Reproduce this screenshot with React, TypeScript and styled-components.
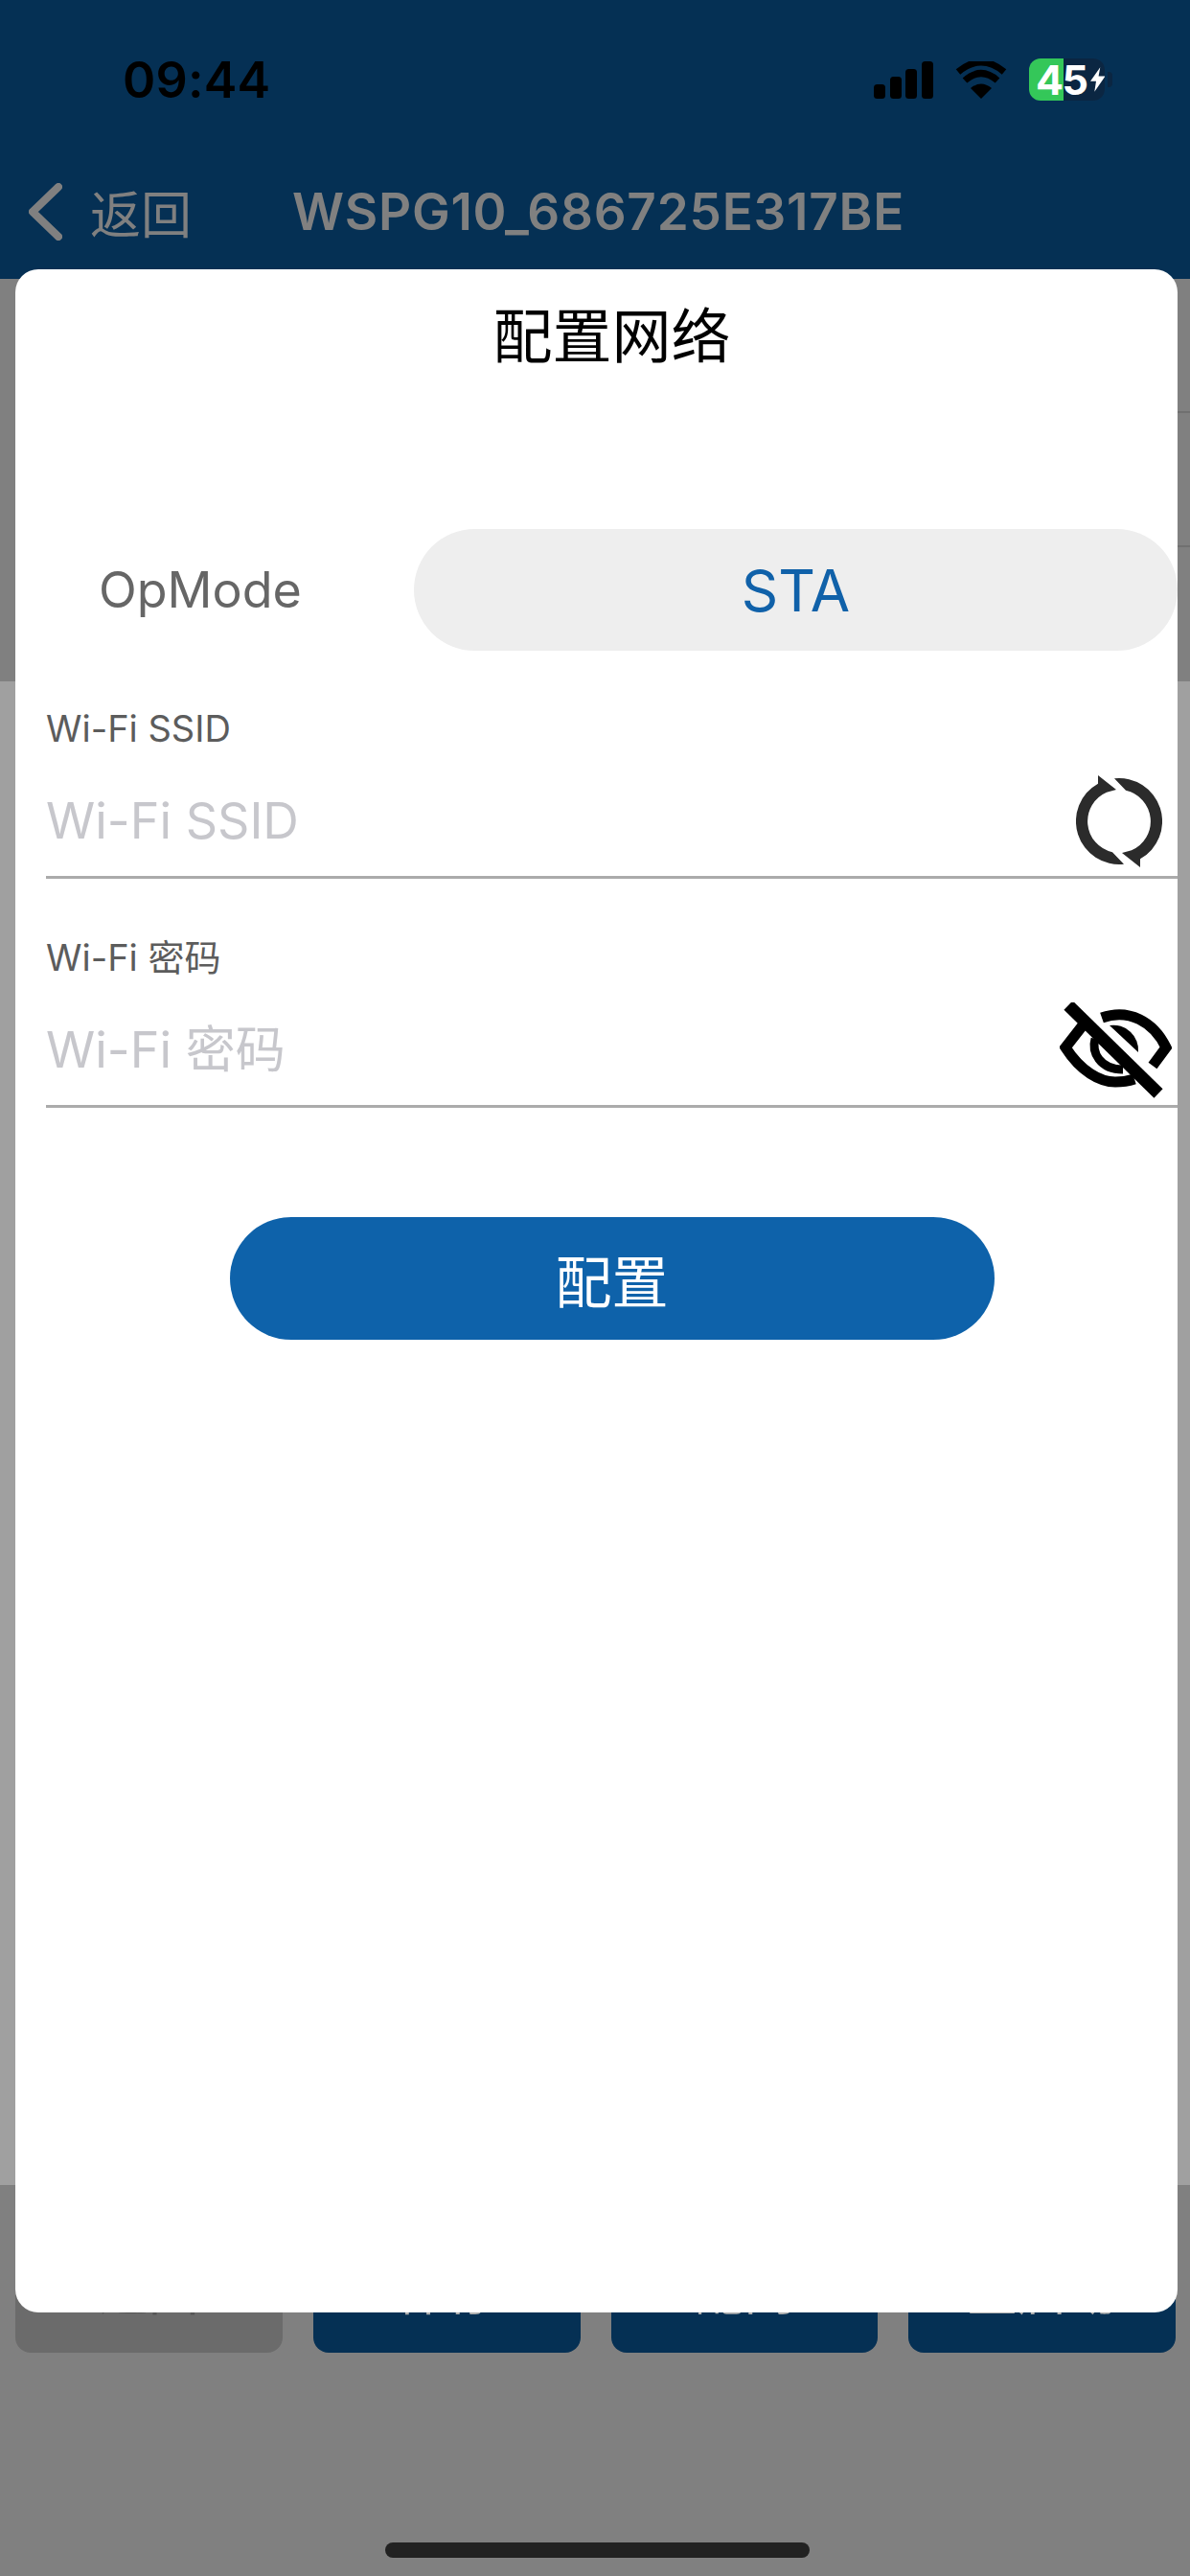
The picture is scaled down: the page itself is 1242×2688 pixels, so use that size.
import React from "react"
import styled, { createGlobalStyle } from "styled-components"

const GlobalStyle = createGlobalStyle`
  html, body {
    margin: 0;
    padding: 0;
    background: #808080;
  }
  * {
    box-sizing: border-box;
  }
`

const FONT = `Inter, "Noto Sans CJK SC", sans-serif`

const Page = styled.div`
  position: relative;
  width: 1242px;
  height: 2688px;
  overflow: hidden;
  display: flex;
  flex-direction: column;
  font-family: ${FONT};
  background: #808080;
`

const Header = styled.header`
  height: 291px;
  background: #053054;
  display: flex;
  flex-direction: column;
`

const StatusBar = styled.div`
  height: 166px;
  padding: 0 89px 0 128px;
  display: flex;
  align-items: center;
  justify-content: space-between;
`

const Time = styled.span`
  font-size: 52px;
  font-weight: 600;
  color: #000;
  letter-spacing: 0.2px;
`

const StatusIcons = styled.div`
  display: flex;
  align-items: center;
  gap: 23px;
`

const Battery = styled.div`
  position: relative;
  width: 79px;
  height: 44px;
  border-radius: 12px;
  background: linear-gradient(90deg, #34c759 0 36px, #0b2642 36px 100%);
  display: flex;
  align-items: center;
  padding-left: 7px;
  color: #fff;
  font-size: 43px;
  font-weight: 700;
  letter-spacing: -1.5px;

  &::after {
    content: "";
    position: absolute;
    right: -8px;
    top: 14px;
    width: 5px;
    height: 16px;
    border-radius: 0 4px 4px 0;
    background: #0b2642;
  }
`

const NavBar = styled.div`
  height: 125px;
  padding: 0 0 16px 30px;
  display: flex;
  align-items: center;
  color: #808080;
`

const BackLabel = styled.span`
  margin-left: 29px;
  width: 211px;
  font-size: 53px;
`

const NavTitle = styled.span`
  font-size: 53px;
  font-weight: 600;
  letter-spacing: 0.8px;
`

const ListRow = styled.div<{ $divider?: boolean }>`
  height: 140px;
  margin-left: 30px;
  border-bottom: ${({ $divider }) => ($divider ? "2px solid #707070" : "none")};
`

const Panel = styled.div`
  flex: 1;
  background: #a0a0a0;
`

const Footer = styled.div`
  height: 408px;
  padding: 53px 15px 19px 16px;
  display: flex;
  flex-direction: column;
  align-items: stretch;
  background: #808080;
`

const ActionGrid = styled.div`
  display: grid;
  grid-template-columns: repeat(4, 1fr);
  column-gap: 32px;
`

const ActionButton = styled.div<{ $disabled?: boolean }>`
  height: 122px;
  padding-bottom: 12px;
  border-radius: 16px;
  background: ${({ $disabled }) => ($disabled ? "#6b6b6b" : "#053054")};
  color: ${({ $disabled }) => ($disabled ? "#555" : "#b0b0b0")};
  font-size: 52px;
  display: flex;
  align-items: center;
  justify-content: center;
`

const HomeIndicator = styled.div`
  width: 443px;
  height: 16px;
  margin: 198px 0 0 386px;
  border-radius: 8px;
  background: #222;
`

const Modal = styled.section`
  position: absolute;
  left: 16px;
  top: 281px;
  width: 1213px;
  height: 2132px;
  padding: 35px 0 0 32px;
  border-radius: 24px;
  background: #fff;
`

const ModalTitle = styled.h2`
  margin: 0;
  font-size: 62px;
  line-height: 72px;
  font-weight: 400;
  color: #000;
  text-align: center;
`

const ModeRow = styled.div`
  margin-top: 164px;
  display: flex;
  align-items: center;
`

const ModeLabel = styled.span`
  width: 384px;
  padding-left: 55px;
  font-size: 52px;
  color: #666;
`

const ModePill = styled.div`
  flex: 1;
  height: 127px;
  border-radius: 64px;
  background: #eee;
  color: #1061a9;
  font-size: 60px;
  display: flex;
  align-items: center;
  justify-content: center;
`

const Field = styled.div`
  margin-top: 58px;

  & + & {
    margin-top: 59px;
  }
`

const FieldLabel = styled.label`
  display: block;
  height: 46px;
  line-height: 46px;
  font-size: 38px;
  color: #5c5c5c;
`

const InputRow = styled.div`
  height: 134px;
  padding-top: 16px;
  display: flex;
  align-items: center;
  border-bottom: 3px solid #ababab;
`

const TextInput = styled.input`
  flex: 1;
  min-width: 0;
  padding: 0;
  border: none;
  outline: none;
  background: transparent;
  font-family: ${FONT};
  font-size: 52px;
  color: #333;

  &::placeholder {
    color: #c7c7cc;
    opacity: 1;
  }
`

const IconSlot = styled.span<{ $inset: number }>`
  display: flex;
  margin-right: ${({ $inset }) => $inset}px;
`

const SubmitButton = styled.button`
  display: block;
  width: 798px;
  height: 128px;
  margin: 114px auto 0;
  border: none;
  border-radius: 64px;
  background: #0e62aa;
  color: #fff;
  font-family: ${FONT};
  font-size: 59px;
`

const SignalIcon = () => (
  <svg width="62" height="39" viewBox="0 0 62 39">
    <rect x="0" y="24" width="12" height="15" rx="3.5" />
    <rect x="17" y="16" width="12" height="23" rx="3.5" />
    <rect x="33" y="8" width="12" height="31" rx="3.5" />
    <rect x="50" y="0" width="12" height="39" rx="3.5" />
  </svg>
)

const WifiIcon = () => (
  <svg width="54" height="39" viewBox="0 0 54 39">
    <path d="M27 39 L16 28 Q27 19 38 28 Z" />
    <path d="M10 20 Q27 5 44 20" fill="none" stroke="#000" strokeWidth="7" />
    <path d="M3 11 Q27 -9 51 11" fill="none" stroke="#000" strokeWidth="7" />
  </svg>
)

const BoltIcon = () => (
  <svg width="18" height="30" viewBox="0 0 18 30" style={{ marginLeft: 3 }}>
    <path d="M12 0 L0 17 H7 L5 30 L18 11 H10 Z" fill="#fff" />
  </svg>
)

const BackChevron = () => (
  <svg width="35" height="60" viewBox="0 0 35 60">
    <path
      d="M31 4 L4 30 L31 56"
      fill="none"
      stroke="#808080"
      strokeWidth="8"
      strokeLinecap="round"
      strokeLinejoin="round"
    />
  </svg>
)

const RefreshIcon = () => {
  const arc = "M23 0 L42 15 L32 17.7 A33 33 0 0 0 38 80.2 L50 92.7 A45 45 0 0 1 23 8.7 Z"
  return (
    <svg width="90" height="96" viewBox="0 0 90 96" fill="#2b2b2b">
      <path d={arc} />
      <path d={arc} transform="rotate(180 45 48)" />
    </svg>
  )
}

const EyeOffIcon = () => (
  <svg width="117" height="100" viewBox="0 0 117 100">
    <g fill="none" stroke="#000" strokeWidth="11">
      <path d="M44 16 C72 6 98 20 111 47 L97 66" strokeLinejoin="miter" />
      <path d="M24 24 L6 47 C22 72 42 83 58 83 C66 83 72 82 78 80" />
      <path d="M37 38 C33 52 42 70 66 70" strokeWidth="9" />
    </g>
    <path d="M52 24 A26 26 0 0 1 82 52 Z" fill="#000" />
    <path d="M9 3 L103 95" stroke="#000" strokeWidth="13" fill="none" />
  </svg>
)

const App: React.FC = () => {
  return (
    <Page>
      <GlobalStyle />
      <Header>
        <StatusBar>
          <Time>09:44</Time>
          <StatusIcons>
            <SignalIcon />
            <WifiIcon />
            <Battery>
              45
              <BoltIcon />
            </Battery>
          </StatusIcons>
        </StatusBar>
        <NavBar>
          <BackChevron />
          <BackLabel>返回</BackLabel>
          <NavTitle>WSPG10_686725E317BE</NavTitle>
        </NavBar>
      </Header>

      <ListRow $divider />
      <ListRow $divider />
      <ListRow />
      <Panel />

      <Footer>
        <ActionGrid>
          <ActionButton $disabled>返回</ActionButton>
          <ActionButton>保存</ActionButton>
          <ActionButton>配网</ActionButton>
          <ActionButton>重启动</ActionButton>
        </ActionGrid>
        <HomeIndicator />
      </Footer>

      <Modal>
        <ModalTitle>配置网络</ModalTitle>
        <ModeRow>
          <ModeLabel>OpMode</ModeLabel>
          <ModePill>STA</ModePill>
        </ModeRow>
        <Field>
          <FieldLabel>Wi-Fi SSID</FieldLabel>
          <InputRow>
            <TextInput placeholder="Wi-Fi SSID" />
            <IconSlot $inset={16}>
              <RefreshIcon />
            </IconSlot>
          </InputRow>
        </Field>
        <Field>
          <FieldLabel>Wi-Fi 密码</FieldLabel>
          <InputRow>
            <TextInput placeholder="Wi-Fi 密码" />
            <IconSlot $inset={6}>
              <EyeOffIcon />
            </IconSlot>
          </InputRow>
        </Field>
        <SubmitButton>配置</SubmitButton>
      </Modal>
    </Page>
  )
}

export default App
